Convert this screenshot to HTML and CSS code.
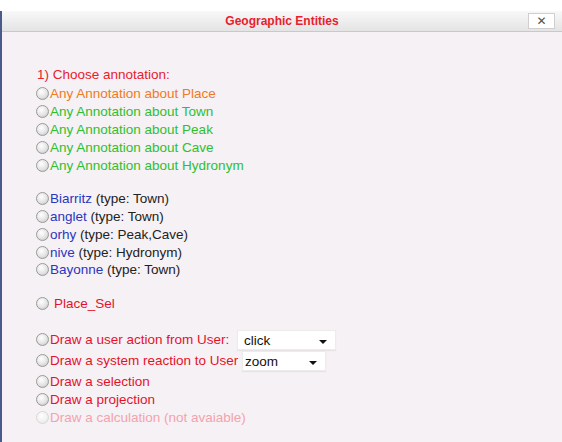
FILE: index.html
```html
<!DOCTYPE html>
<html>
<head>
<meta charset="utf-8">
<link rel="stylesheet" href="styles.css">
</head>
<body>
<div class="dialog">
  <div class="titlebar">
    <span class="title">Geographic Entities</span>
    <button class="close">&#x2715;</button>
  </div>
  <div class="content">
    <div class="heading">1) Choose annotation:</div>
    <label class="row orange"><span class="radio"></span>Any Annotation about Place</label>
    <label class="row green"><span class="radio"></span>Any Annotation about Town</label>
    <label class="row green"><span class="radio"></span>Any Annotation about Peak</label>
    <label class="row green"><span class="radio"></span>Any Annotation about Cave</label>
    <label class="row green"><span class="radio"></span>Any Annotation about Hydronym</label>

    <div class="group places">
      <label class="row"><span class="radio"></span><span class="blue">Biarritz</span>&nbsp;(type: Town)</label>
      <label class="row"><span class="radio"></span><span class="blue">anglet</span>&nbsp;(type: Town)</label>
      <label class="row"><span class="radio"></span><span class="blue">orhy</span>&nbsp;(type: Peak,Cave)</label>
      <label class="row"><span class="radio"></span><span class="blue">nive</span>&nbsp;(type: Hydronym)</label>
      <label class="row"><span class="radio"></span><span class="blue">Bayonne</span>&nbsp;(type: Town)</label>
    </div>

    <div class="group single">
      <label class="row red sel"><span class="radio"></span>Place_Sel</label>
    </div>

    <div class="group draw">
      <label class="row red"><span class="radio"></span>Draw a user action from User:&nbsp;<span class="select s1">click<i class="caret"></i></span></label>
      <label class="row red"><span class="radio"></span>Draw a system reaction to User&nbsp;<span class="select s2">zoom<i class="caret"></i></span></label>
      <label class="row red"><span class="radio"></span>Draw a selection</label>
      <label class="row red"><span class="radio"></span>Draw a projection</label>
      <label class="row pink"><span class="radio disabled"></span>Draw a calculation (not avaiable)</label>
    </div>
  </div>
</div>
</body>
</html>
```
FILE: styles.css
```css
html, body {
  margin: 0;
  padding: 0;
  background: #ffffff;
  width: 562px;
  height: 442px;
  overflow: hidden;
}
.dialog {
  margin-top: 11px;
  height: 431px;
  background: #f6f1f4;
  border-left: 2px solid #4a5a8a;
  box-sizing: border-box;
  font-family: "Liberation Sans", Arial, sans-serif;
}
.titlebar {
  height: 20px;
  display: flex;
  align-items: center;
  justify-content: center;
  position: relative;
  background: linear-gradient(#f8f8f8, #e4e4e4);
  border-bottom: 1px solid #c9c9c9;
}
.title {
  color: #e8202c;
  font-weight: bold;
  font-size: 12px;
}
.close {
  position: absolute;
  right: 7px;
  top: 2px;
  width: 27px;
  height: 16px;
  padding: 0;
  background: #ffffff;
  border: 1px solid #cfcfcf;
  color: #505050;
  font-size: 12px;
  font-weight: bold;
  line-height: 14px;
  font-family: "DejaVu Sans", sans-serif;
}
.content {
  padding: 34px 0 0 34px;
  font-size: 13.5px;
}
.heading {
  color: #e8202c;
  line-height: 18px;
  padding-left: 1px;
}
.row {
  display: flex;
  align-items: center;
  height: 18px;
  white-space: nowrap;
  color: #222;
}
.radio {
  width: 11px;
  height: 11px;
  border-radius: 50%;
  border: 1px solid #9a9a9a;
  background: radial-gradient(circle at 40% 35%, #ffffff 0%, #e4e4e4 55%, #bcbcbc 100%);
  margin: 0 1px 0 0;
  flex: none;
}
.radio.disabled {
  border-color: #d8d8d8;
  background: radial-gradient(circle at 40% 35%, #ffffff 0%, #f0f0f0 60%, #dcdcdc 100%);
}
.orange { color: #f07a1e; }
.green { color: #2ec02e; }
.blue { color: #2a36c0; }
.red { color: #e4112c; }
.pink { color: #f3a3ae; }
.group.places { margin-top: 16px; }
.places .row { height: 17.75px; }
.group.single { margin-top: 16px; }
.sel .radio { margin-right: 5px; }
.group.draw { margin-top: 17px; }
.draw .row:nth-child(1) { height: 20px; }
.draw .row:nth-child(2) { height: 22px; }
.draw .row:nth-child(3) { height: 19px; }
.select {
  position: relative;
  display: inline-block;
  background: #fff;
  height: 20px;
  line-height: 20px;
  color: #111;
  padding-left: 6px;
  box-sizing: border-box;
  border: 1px solid #ececec;
  box-shadow: 0 1px 1px rgba(0,0,0,0.06);
}
.s1 { width: 99px; margin-left: 4px; }
.s2 { width: 84px; padding-left: 2px; }
.caret {
  position: absolute;
  right: 8px;
  top: 9px;
  width: 0;
  height: 0;
  border-left: 4px solid transparent;
  border-right: 4px solid transparent;
  border-top: 4px solid #111;
}
```
